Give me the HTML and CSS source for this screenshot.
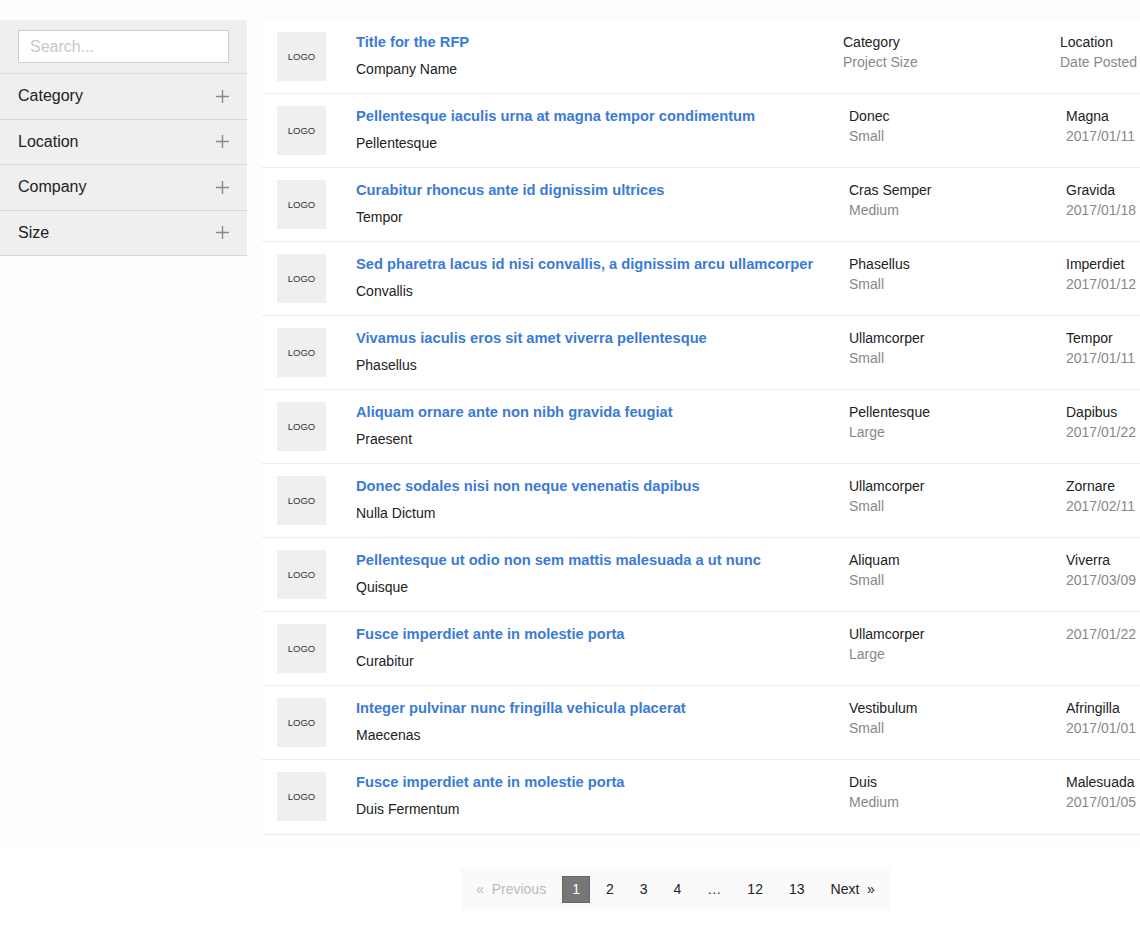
FILE: index.html
```html
<!DOCTYPE html>
<html>
<head>
<meta charset="utf-8">
<title>RFP List</title>
<link rel="stylesheet" href="styles.css">
</head>
<body>
<div class="page">
  <aside class="sidebar">
    <div class="search-wrap">
      <input class="search" type="text" placeholder="Search...">
    </div>
    <div class="filter"><span>Category</span><svg class="plus" width="13" height="13" viewBox="0 0 13 13"><path d="M6.5 0v13M0 6.5h13" stroke="#888" stroke-width="1.4" fill="none"/></svg></div>
    <div class="filter"><span>Location</span><svg class="plus" width="13" height="13" viewBox="0 0 13 13"><path d="M6.5 0v13M0 6.5h13" stroke="#888" stroke-width="1.4" fill="none"/></svg></div>
    <div class="filter"><span>Company</span><svg class="plus" width="13" height="13" viewBox="0 0 13 13"><path d="M6.5 0v13M0 6.5h13" stroke="#888" stroke-width="1.4" fill="none"/></svg></div>
    <div class="filter"><span>Size</span><svg class="plus" width="13" height="13" viewBox="0 0 13 13"><path d="M6.5 0v13M0 6.5h13" stroke="#888" stroke-width="1.4" fill="none"/></svg></div>
  </aside>
  <main class="main">
    <div class="list">
      <div class="row row-head">
        <div class="logo">LOGO</div>
        <div class="info"><a class="title">Title for the RFP</a><div class="company">Company Name</div></div>
        <div class="meta"><div class="primary">Category</div><div class="secondary">Project Size</div></div>
        <div class="meta"><div class="primary">Location</div><div class="secondary">Date Posted</div></div>
      </div>
      <div class="row">
        <div class="logo">LOGO</div>
        <div class="info"><a class="title">Pellentesque iaculis urna at magna tempor condimentum</a><div class="company">Pellentesque</div></div>
        <div class="meta"><div class="primary">Donec</div><div class="secondary">Small</div></div>
        <div class="meta"><div class="primary">Magna</div><div class="secondary">2017/01/11</div></div>
      </div>
      <div class="row">
        <div class="logo">LOGO</div>
        <div class="info"><a class="title">Curabitur rhoncus ante id dignissim ultrices</a><div class="company">Tempor</div></div>
        <div class="meta"><div class="primary">Cras Semper</div><div class="secondary">Medium</div></div>
        <div class="meta"><div class="primary">Gravida</div><div class="secondary">2017/01/18</div></div>
      </div>
      <div class="row">
        <div class="logo">LOGO</div>
        <div class="info"><a class="title">Sed pharetra lacus id nisi convallis, a dignissim arcu ullamcorper</a><div class="company">Convallis</div></div>
        <div class="meta"><div class="primary">Phasellus</div><div class="secondary">Small</div></div>
        <div class="meta"><div class="primary">Imperdiet</div><div class="secondary">2017/01/12</div></div>
      </div>
      <div class="row">
        <div class="logo">LOGO</div>
        <div class="info"><a class="title">Vivamus iaculis eros sit amet viverra pellentesque</a><div class="company">Phasellus</div></div>
        <div class="meta"><div class="primary">Ullamcorper</div><div class="secondary">Small</div></div>
        <div class="meta"><div class="primary">Tempor</div><div class="secondary">2017/01/11</div></div>
      </div>
      <div class="row">
        <div class="logo">LOGO</div>
        <div class="info"><a class="title">Aliquam ornare ante non nibh gravida feugiat</a><div class="company">Praesent</div></div>
        <div class="meta"><div class="primary">Pellentesque</div><div class="secondary">Large</div></div>
        <div class="meta"><div class="primary">Dapibus</div><div class="secondary">2017/01/22</div></div>
      </div>
      <div class="row">
        <div class="logo">LOGO</div>
        <div class="info"><a class="title">Donec sodales nisi non neque venenatis dapibus</a><div class="company">Nulla Dictum</div></div>
        <div class="meta"><div class="primary">Ullamcorper</div><div class="secondary">Small</div></div>
        <div class="meta"><div class="primary">Zornare</div><div class="secondary">2017/02/11</div></div>
      </div>
      <div class="row">
        <div class="logo">LOGO</div>
        <div class="info"><a class="title">Pellentesque ut odio non sem mattis malesuada a ut nunc</a><div class="company">Quisque</div></div>
        <div class="meta"><div class="primary">Aliquam</div><div class="secondary">Small</div></div>
        <div class="meta"><div class="primary">Viverra</div><div class="secondary">2017/03/09</div></div>
      </div>
      <div class="row">
        <div class="logo">LOGO</div>
        <div class="info"><a class="title">Fusce imperdiet ante in molestie porta</a><div class="company">Curabitur</div></div>
        <div class="meta"><div class="primary">Ullamcorper</div><div class="secondary">Large</div></div>
        <div class="meta"><div class="secondary">2017/01/22</div></div>
      </div>
      <div class="row">
        <div class="logo">LOGO</div>
        <div class="info"><a class="title">Integer pulvinar nunc fringilla vehicula placerat</a><div class="company">Maecenas</div></div>
        <div class="meta"><div class="primary">Vestibulum</div><div class="secondary">Small</div></div>
        <div class="meta"><div class="primary">Afringilla</div><div class="secondary">2017/01/01</div></div>
      </div>
      <div class="row">
        <div class="logo">LOGO</div>
        <div class="info"><a class="title">Fusce imperdiet ante in molestie porta</a><div class="company">Duis Fermentum</div></div>
        <div class="meta"><div class="primary">Duis</div><div class="secondary">Medium</div></div>
        <div class="meta"><div class="primary">Malesuada</div><div class="secondary">2017/01/05</div></div>
      </div>
    </div>
    <nav class="pager-wrap">
      <ul class="pager">
        <li class="pg disabled">« &nbsp;Previous</li>
        <li class="pg current">1</li>
        <li class="pg">2</li>
        <li class="pg">3</li>
        <li class="pg">4</li>
        <li class="pg">…</li>
        <li class="pg">12</li>
        <li class="pg">13</li>
        <li class="pg">Next &nbsp;»</li>
      </ul>
    </nav>
  </main>
</div>
</body>
</html>
```

FILE: styles.css
```css
html, body {
  margin: 0;
  padding: 0;
  background: #ffffff;
}

body {
  width: 1140px;
  height: 931px;
  overflow: hidden;
  font-family: "Liberation Sans", Arial, Helvetica, sans-serif;
  color: #222;
}

.page {
  display: flex;
  align-items: flex-start;
  padding-top: 20px;
  background: linear-gradient(#fdfdfd, #fdfdfd) no-repeat;
  background-size: 100% 848px;
}

.sidebar {
  width: 247px;
  flex: none;
  background: #efefef;
}

.search-wrap {
  padding: 10px 18px;
  border-bottom: 1px solid #dcdcdc;
}

.search {
  display: block;
  box-sizing: border-box;
  width: 211px;
  height: 33px;
  margin: 0;
  padding: 0 11px;
  border: 1px solid #cfcfcf;
  background: #fff;
  font-family: "Liberation Sans", Arial, sans-serif;
  font-size: 16px;
  color: #222;
  outline: none;
}

.search::placeholder {
  color: #c8c8c8;
}

.filter {
  display: flex;
  align-items: center;
  justify-content: space-between;
  height: 44.5px;
  padding: 0 18px;
  border-bottom: 1px solid #d6d6d6;
  font-size: 16px;
  color: #222;
}

.plus {
  display: block;
}

.main {
  flex: 1;
  margin-left: 15px;
  min-width: 0;
}

.list {
  background: #fff;
}

.row {
  display: grid;
  grid-template-columns: 79px 493px 217px 1fr;
  padding: 12px 0 12.05px 15px;
  border-bottom: 1px solid #ececec;
  align-items: start;
}

.row-head {
  grid-template-columns: 79px 487px 217px 1fr;
}

.logo {
  width: 49px;
  height: 49px;
  background: #efefef;
  color: #333;
  font-size: 9.5px;
  display: flex;
  align-items: center;
  justify-content: center;
}

.info {
  min-width: 0;
}

.title {
  display: block;
  font-size: 14.7px;
  font-weight: bold;
  line-height: 20px;
  color: #3a7bd5;
  white-space: nowrap;
}

.company {
  margin-top: 7px;
  font-size: 14px;
  line-height: 20px;
  color: #222;
}

.meta {
  font-size: 14px;
  line-height: 20px;
  white-space: nowrap;
}

.primary {
  color: #222;
}

.secondary {
  color: #888;
}

.pager-wrap {
  display: flex;
  justify-content: center;
  margin-top: 33px;
  margin-right: 51px;
}

.pager {
  display: flex;
  gap: 6px;
  list-style: none;
  margin: 0;
  padding: 8px 5px;
  background: #fafafa;
}

.pg {
  height: 27px;
  line-height: 27px;
  padding: 0 10px;
  font-size: 14px;
  color: #222;
}

.pg.disabled {
  color: #bbb;
}

.pg.current {
  background: #777;
  color: #fff;
  box-sizing: border-box;
  border: 1px solid #666;
  line-height: 25px;
  padding: 0 9px;
}
```
